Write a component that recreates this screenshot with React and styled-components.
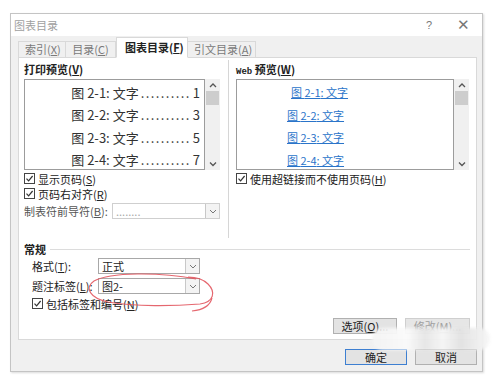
import React from "react";
import styled, { createGlobalStyle } from "styled-components";

const GlobalStyle = createGlobalStyle`
  body {
    margin: 0;
    background: #ffffff;
    font-family: "Noto Sans CJK SC", "Liberation Sans", sans-serif;
    color: #2b2b2b;
  }
`;

const Page = styled.div`
  position: relative;
  width: 500px;
  height: 389px;
  padding: 13px 0 0 10px;
  box-sizing: border-box;
`;

const Dialog = styled.div`
  width: 473px;
  height: 359px;
  box-sizing: border-box;
  border: 1px solid #c4c4c4;
  box-shadow: 1px 1px 2px rgba(0, 0, 0, 0.15);
  background: #f0f0f0;
  display: flex;
  flex-direction: column;
`;

const TitleBar = styled.div`
  height: 22px;
  background: #fff;
  display: flex;
  align-items: center;
  padding: 0 12px 0 3px;
  font-size: 11px;
  color: #a0a0a0;
`;

const Title = styled.span`
  flex: 1;
  line-height: 14px;
`;

const TitleIcon = styled.span`
  width: ${(p) => p.$w}px;
  text-align: center;
  font-family: "Liberation Sans", sans-serif;
  font-size: ${(p) => p.$size}px;
  color: #777;
  margin-left: ${(p) => p.$ml || 0}px;
  line-height: 14px;
`;

const Body = styled.div`
  flex: 1;
  padding: 0 5px 0 7px;
  display: flex;
  flex-direction: column;
`;

const TabStrip = styled.div`
  display: flex;
  align-items: flex-end;
  height: 22px;
  margin-bottom: -1px;
  position: relative;
  z-index: 1;
`;

const Tab = styled.div`
  height: ${(p) => (p.$active ? 21 : 17)}px;
  box-sizing: border-box;
  padding: 0 ${(p) => (p.$active ? 8 : 6)}px;
  border: 1px solid #d9d9d9;
  border-bottom: ${(p) => (p.$active ? "1px solid #fff" : "1px solid #d9d9d9")};
  border-left: ${(p) => (p.$first || p.$active ? "1px solid #d9d9d9" : "none")};
  background: ${(p) => (p.$active ? "#fff" : "#f0f0f0")};
  color: ${(p) => (p.$active ? "#222" : "#7a7a7a")};
  font-size: 11px;
  line-height: ${(p) => (p.$active ? 19 : 15)}px;
  width: ${(p) => p.$w}px;
  text-align: center;
  white-space: nowrap;
  font-weight: ${(p) => (p.$active ? 600 : 400)};
`;

const Panel = styled.div`
  height: 283px;
  box-sizing: border-box;
  background: #fff;
  border: 1px solid #d9d9d9;
  padding: 4px 6px 0 5px;
  display: flex;
  flex-direction: column;
`;

const TopSection = styled.div`
  display: flex;
  height: 178px;
`;

const Column = styled.div`
  width: ${(p) => p.$w}px;
  display: flex;
  flex-direction: column;
`;

const VDivider = styled.div`
  width: 1px;
  background: #d6d6d6;
  margin: -2px 7px 0 8px;
  height: 178px;
`;

const Label = styled.div`
  font-size: 11px;
  line-height: 14px;
  height: 14px;
  color: #222;
  font-weight: ${(p) => (p.$bold ? 600 : 400)};
  white-space: nowrap;
`;

const Mono = styled.span`
  font-family: "Liberation Mono", monospace;
  font-size: 9px;
  font-weight: 700;
`;

const PreviewBox = styled.div`
  margin-top: 3px;
  height: 91px;
  display: flex;
`;

const ListArea = styled.div`
  flex: 1;
  box-sizing: border-box;
  border: 1px solid #9c9c9c;
  padding-top: 1px;
  overflow: hidden;
`;

const PrintRow = styled.div`
  height: 22.5px;
  display: flex;
  align-items: center;
  justify-content: flex-end;
  padding-right: 4px;
  font-size: 13px;
  color: #333;
  white-space: nowrap;
`;

const Dots = styled.span`
  letter-spacing: 1.4px;
  margin: 0 2px 0 2px;
`;

const WebRow = styled.div`
  height: 22.5px;
  display: flex;
  align-items: center;
  padding-left: ${(p) => p.$pl}px;
`;

const WebLink = styled.span`
  font-size: 11px;
  color: #2a74c9;
  text-decoration: underline;
  white-space: nowrap;
`;

const ScrollBar = styled.div`
  width: 15px;
  background: #f0f0f0;
  display: flex;
  flex-direction: column;
  align-items: center;
`;

const ScrollArrow = styled.div`
  height: 12px;
  display: flex;
  align-items: center;
  justify-content: center;
`;

const Thumb = styled.div`
  width: 13px;
  height: 14px;
  background: #cdcdcd;
  margin-bottom: auto;
`;

const CheckRow = styled.div`
  display: flex;
  align-items: center;
  gap: 3px;
  height: 15px;
  margin-top: ${(p) => p.$mt || 0}px;
  padding-left: ${(p) => p.$pl || 0}px;
`;

const Box = styled.span`
  width: 11px;
  height: 11px;
  box-sizing: border-box;
  border: 1px solid #444;
  background: #fff;
  display: inline-flex;
  align-items: center;
  justify-content: center;
`;

const FieldRow = styled.div`
  display: flex;
  align-items: center;
  height: 16px;
  margin-top: ${(p) => p.$mt || 0}px;
  padding-left: ${(p) => p.$pl || 0}px;
`;

const FieldLabel = styled(Label)`
  width: ${(p) => p.$w}px;
  color: ${(p) => (p.$muted ? "#555" : "#222")};
`;

const Select = styled.div`
  width: ${(p) => p.$w}px;
  height: 16px;
  box-sizing: border-box;
  border: 1px solid ${(p) => (p.$disabled ? "#cfcfcf" : "#a8a8a8")};
  background: #fff;
  display: flex;
  align-items: center;
`;

const SelectValue = styled.span`
  flex: 1;
  padding-left: 3px;
  font-size: 11px;
  line-height: 14px;
  color: ${(p) => (p.$disabled ? "#aaa" : "#222")};
  white-space: nowrap;
`;

const SelectArrow = styled.span`
  width: 14px;
  height: 14px;
  box-sizing: border-box;
  border-left: 1px solid #c8c8c8;
  background: #f3f3f3;
  display: flex;
  align-items: center;
  justify-content: center;
`;

const GroupHead = styled.div`
  display: flex;
  align-items: center;
  gap: 4px;
  margin-top: 2px;
  height: 14px;
`;

const GroupLine = styled.div`
  flex: 1;
  height: 1px;
  background: #dcdcdc;
`;

const ButtonRow = styled.div`
  display: flex;
  justify-content: flex-end;
  gap: 8px;
  margin-top: ${(p) => p.$mt || 0}px;
`;

const Button = styled.div`
  width: ${(p) => p.$w}px;
  height: 16px;
  box-sizing: border-box;
  border: 1px solid ${(p) => (p.$default ? "#3d7fd1" : p.$disabled ? "#cfcfcf" : "#b0b0b0")};
  background: ${(p) => (p.$disabled ? "#e6e6e6" : "#e3e3e3")};
  color: ${(p) => (p.$disabled ? "#a0a0a0" : "#222")};
  font-size: 11px;
  line-height: 14px;
  text-align: center;
  white-space: nowrap;
`;

const Footer = styled.div`
  display: flex;
  justify-content: flex-end;
  gap: 8px;
  margin-top: 9px;
`;

const RedMark = styled.svg`
  position: absolute;
  left: 0;
  top: 0;
  pointer-events: none;
`;

const Smudge = styled.div`
  position: absolute;
  left: 372px;
  top: 328px;
  width: 118px;
  height: 22px;
  border-radius: 11px;
  background: linear-gradient(90deg, #f4f4f4 0%, #fafafa 30%, #e6e6e6 45%, #f6f6f6 60%, #e2e2e2 75%, #f7f7f7 100%);
  filter: blur(1.5px);
  opacity: 0.95;
`;

const Chevron = ({ up }) => (
  <svg width="8" height="6" viewBox="0 0 8 6">
    <path
      d={up ? "M1 5 L4 2 L7 5" : "M1 1.5 L4 4.5 L7 1.5"}
      fill="none"
      stroke="#555"
      strokeWidth="1.3"
    />
  </svg>
);

const Check = ({ checked = true }) => (
  <Box>
    {checked && (
      <svg width="9" height="9" viewBox="0 0 9 9">
        <path d="M1.5 4.6 L3.6 6.8 L7.6 2" fill="none" stroke="#333" strokeWidth="1.2" />
      </svg>
    )}
  </Box>
);

const Scroll = () => (
  <ScrollBar>
    <ScrollArrow>
      <Chevron up />
    </ScrollArrow>
    <Thumb />
    <ScrollArrow>
      <Chevron />
    </ScrollArrow>
  </ScrollBar>
);

const DropArrow = () => (
  <SelectArrow>
    <svg width="8" height="5" viewBox="0 0 8 5">
      <path d="M1 1 L4 4 L7 1" fill="none" stroke="#777" strokeWidth="1" />
    </svg>
  </SelectArrow>
);

const printItems = [
  ["2-1", "1"],
  ["2-2", "3"],
  ["2-3", "5"],
  ["2-4", "7"],
];

const webItems = [
  ["2-1", 54],
  ["2-2", 50],
  ["2-3", 50],
  ["2-4", 50],
];

export default function App() {
  return (
    <Page>
      <GlobalStyle />
      <Dialog>
        <TitleBar>
          <Title>图表目录</Title>
          <TitleIcon $w={10} $size={11}>?</TitleIcon>
          <TitleIcon $w={14} $size={15} $ml={22}>✕</TitleIcon>
        </TitleBar>
        <Body>
          <TabStrip>
            <Tab $first $w={48}>索引(<u>X</u>)</Tab>
            <Tab $w={50}>目录(<u>C</u>)</Tab>
            <Tab $active $w={72}>图表目录(<u>F</u>)</Tab>
            <Tab $w={68}>引文目录(<u>A</u>)</Tab>
          </TabStrip>
          <Panel>
            <TopSection>
              <Column $w={196}>
                <Label $bold>打印预览(<u>V</u>)</Label>
                <PreviewBox>
                  <ListArea>
                    {printItems.map(([n, p]) => (
                      <PrintRow key={n}>
                        图 {n}: 文字<Dots>..........</Dots>{p}
                      </PrintRow>
                    ))}
                  </ListArea>
                  <Scroll />
                </PreviewBox>
                <CheckRow $mt={1}>
                  <Check />
                  <Label>显示页码(<u>S</u>)</Label>
                </CheckRow>
                <CheckRow>
                  <Check />
                  <Label>页码右对齐(<u>R</u>)</Label>
                </CheckRow>
                <FieldRow $mt={2}>
                  <FieldLabel $w={88} $muted>制表符前导符(<u>B</u>):</FieldLabel>
                  <Select $w={108} $disabled>
                    <SelectValue $disabled>........</SelectValue>
                    <DropArrow />
                  </Select>
                </FieldRow>
              </Column>
              <VDivider />
              <Column $w={233}>
                <Label $bold>
                  <Mono>Web</Mono> 预览(<u>W</u>)
                </Label>
                <PreviewBox>
                  <ListArea>
                    {webItems.map(([n, pl]) => (
                      <WebRow key={n} $pl={pl}>
                        <WebLink>图 {n}: 文字</WebLink>
                      </WebRow>
                    ))}
                  </ListArea>
                  <Scroll />
                </PreviewBox>
                <CheckRow $mt={1}>
                  <Check />
                  <Label>使用超链接而不使用页码(<u>H</u>)</Label>
                </CheckRow>
              </Column>
            </TopSection>
            <GroupHead>
              <Label $bold>常规</Label>
              <GroupLine />
            </GroupHead>
            <FieldRow $mt={2} $pl={8}>
              <FieldLabel $w={66}>格式(<u>T</u>):</FieldLabel>
              <Select $w={102}>
                <SelectValue>正式</SelectValue>
                <DropArrow />
              </Select>
            </FieldRow>
            <FieldRow $mt={4} $pl={8}>
              <FieldLabel $w={66}>题注标签(<u>L</u>):</FieldLabel>
              <Select $w={102}>
                <SelectValue>图2-</SelectValue>
                <DropArrow />
              </Select>
            </FieldRow>
            <CheckRow $mt={2} $pl={8}>
              <Check />
              <Label>包括标签和编号(<u>N</u>)</Label>
            </CheckRow>
            <ButtonRow $mt={7}>
              <Button $w={64}>选项(<u>O</u>)...</Button>
              <Button $w={65} $disabled>修改(<u>M</u>)...</Button>
            </ButtonRow>
          </Panel>
          <Footer>
            <Button $w={62} $default>确定</Button>
            <Button $w={62}>取消</Button>
          </Footer>
        </Body>
      </Dialog>
      <RedMark width="500" height="389" viewBox="0 0 500 389">
        <path
          d="M196 279 C160 272 110 272 94 281 C84 288 90 298 108 302 C135 307 175 306 200 304 C214 302 216 292 208 284 C203 279 196 277 188 277"
          fill="none"
          stroke="#e2575f"
          strokeWidth="1.1"
          opacity="0.9"
        />
        <path d="M212 298 C210 306 202 310 192 311" fill="none" stroke="#e2575f" strokeWidth="1.1" opacity="0.9" />
      </RedMark>
      <Smudge />
    </Page>
  );
}
